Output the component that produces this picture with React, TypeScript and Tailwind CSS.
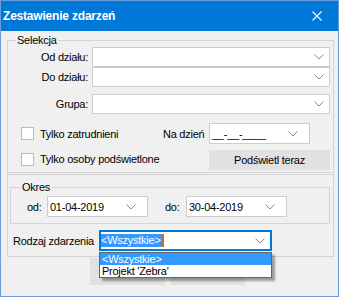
import React from 'react';

const Chevron = () => (
    <svg width="10" height="6" viewBox="0 0 10 6" className="shrink-0">
        <polyline points="0.5,0.5 5,5 9.5,0.5" fill="none" stroke="#8a8a8a" strokeWidth="1" />
    </svg>
);

const Combo: React.FC<{ className?: string }> = ({ className = '' }) => (
    <div className={`h-[20px] border border-[#cccccc] bg-white flex items-center justify-end pr-[5px] ${className}`}>
        <Chevron />
    </div>
);

const DateBox: React.FC<{ value: string; className?: string }> = ({ value, className = '' }) => (
    <div className={`h-[21px] w-[101px] border border-[#cccccc] bg-white flex items-center pl-[2px] pr-[11px] ${className}`}>
        <span className="flex-1 leading-[14px]">{value}</span>
        <Chevron />
    </div>
);

const Checkbox: React.FC<{ label: string; className?: string }> = ({ label, className = '' }) => (
    <div className={`flex items-center gap-[6px] whitespace-nowrap ${className}`}>
        <span className="w-[13px] h-[13px] border border-[#bcbcbc] bg-white shrink-0" />
        <span className="leading-[14px]">{label}</span>
    </div>
);

export default function App() {
    return (
        <div className="w-[339px] h-[297px] border border-[#6b9bd8] bg-[#f0f0f0] flex flex-col text-[11px] tracking-[-0.25px] text-black font-['Liberation_Sans',Arial,sans-serif]">
            <div className="h-[30px] shrink-0 bg-[#0078d7] flex items-center justify-between pl-[2px] pr-[16px]">
                <span className="text-white font-bold text-[12px] tracking-[-0.2px]">Zestawienie zdarzeń</span>
                <svg width="10" height="10" viewBox="0 0 10 10">
                    <path d="M0.5 0.5 L9.5 9.5 M9.5 0.5 L0.5 9.5" stroke="white" strokeWidth="1.1" fill="none" />
                </svg>
            </div>

            <div className="flex flex-col pl-[6px] pr-[4px] pt-[2px]">
                <fieldset className="border border-[#d5d5d5] pr-[3px] pb-[2px]">
                    <legend className="ml-[8px] px-[1px] leading-[14px]">Selekcja</legend>
                    <div className="grid grid-cols-[80px_1fr] gap-x-[4px] items-center">
                        <span className="text-right leading-[14px]">Od działu:</span>
                        <Combo />
                        <span className="text-right leading-[14px]">Do działu:</span>
                        <Combo />
                        <span className="text-right leading-[14px] mt-[7px]">Grupa:</span>
                        <Combo className="mt-[7px]" />
                    </div>
                    <div className="flex items-center mt-[9px] h-[21px]">
                        <Checkbox label="Tylko zatrudnieni" className="w-[155px] pl-[13px]" />
                        <span className="w-[46px] leading-[14px]">Na dzień</span>
                        <DateBox value="__-__-____" className="w-[100px]" />
                    </div>
                    <div className="flex items-center mt-[6px] h-[20px]">
                        <Checkbox label="Tylko osoby podświetlone" className="w-[155px] pl-[13px] -mt-[2px]" />
                        <button className="ml-[46px] w-[121px] h-[20px] bg-[#e1e1e1] border border-[#e1e1e1] leading-[14px]">
                            Podświetl teraz
                        </button>
                    </div>
                </fieldset>

                <div className="mt-[1px] border border-[#d5d5d5] pb-[5px]">
                    <fieldset className="border border-[#d5d5d5] ml-[2px] mr-[3px] mt-[5px] pb-[6px]">
                        <legend className="ml-[10px] px-[1px] leading-[14px]">Okres</legend>
                        <div className="flex items-center pl-[16px] mt-[2px]">
                            <span className="w-[20px] leading-[14px]">od:</span>
                            <DateBox value="01-04-2019" />
                            <span className="ml-[17px] w-[21px] leading-[14px]">do:</span>
                            <DateBox value="30-04-2019" />
                        </div>
                    </fieldset>

                    <div className="flex items-center pl-[5px] mt-[6px]">
                        <span className="w-[86px] leading-[14px]">Rodzaj zdarzenia</span>
                        <div className="relative w-[173px] h-[21px]">
                            <div className="h-full border-2 border-[#0078d7] bg-white flex items-center pr-[5px]">
                                <span className="bg-[#3399ff] text-white leading-[13px] pr-[1px]">&lt;Wszystkie&gt;</span>
                                <span className="w-[2px] h-[13px] bg-[#c86e1e]" />
                                <span className="flex-1" />
                                <Chevron />
                            </div>
                            <div className="absolute left-0 top-[22px] w-[173px] border border-[#646464] bg-white z-10 shadow-[3px_3px_2px_rgba(0,0,0,0.35)]">
                                <div className="h-[12px] leading-[12px] bg-[#3399ff] text-white pl-[2px]">&lt;Wszystkie&gt;</div>
                                <div className="h-[12px] leading-[12px] pl-[2px]">Projekt 'Zebra'</div>
                            </div>
                        </div>
                    </div>
                </div>

                <div className="flex gap-[5px] pl-[83px] mt-[1px]">
                    <div className="w-[75px] h-[27px] bg-[#e1e1e1]" />
                    <div className="w-[75px] h-[27px] bg-[#e1e1e1]" />
                </div>
            </div>
        </div>
    );
}
